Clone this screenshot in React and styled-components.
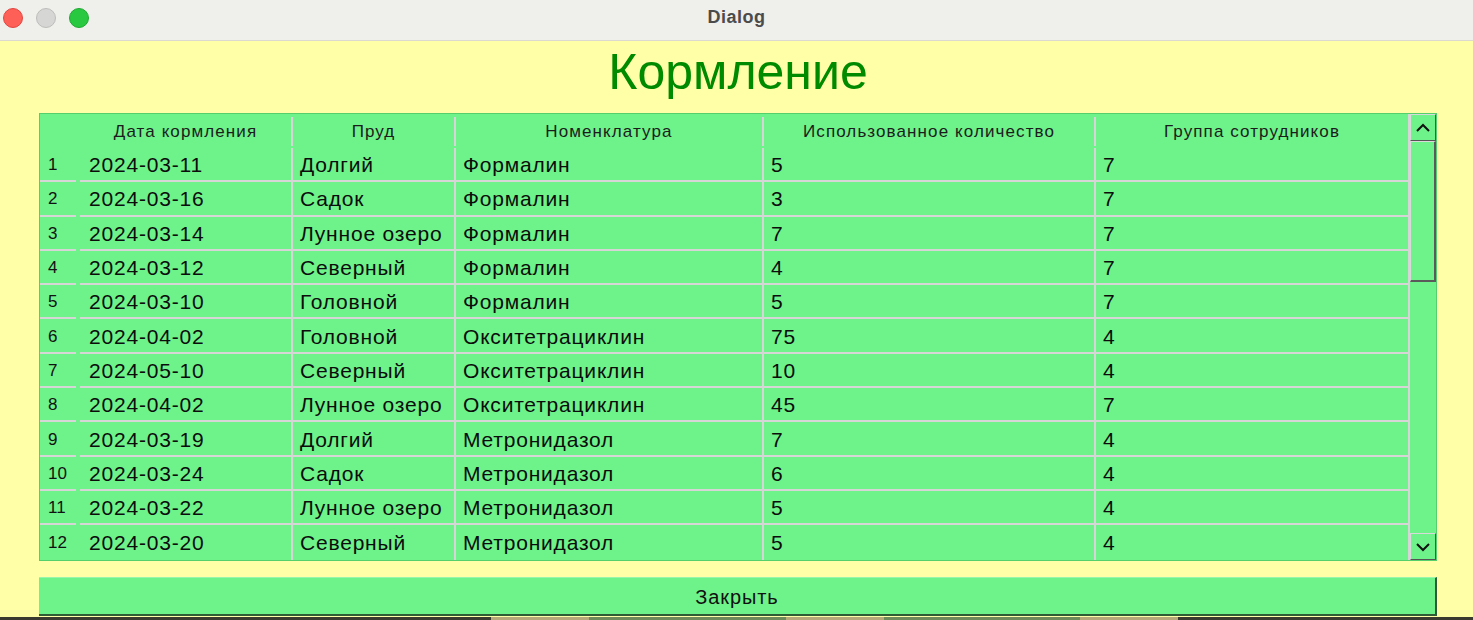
import styled, { createGlobalStyle } from "styled-components";

const GlobalStyle = createGlobalStyle`
  html, body {
    margin: 0;
    padding: 0;
    background: #2b2a26;
  }
  body {
    font-family: "Liberation Sans", Arial, sans-serif;
  }
`;

const rows = [
  ["2024-03-11", "Долгий", "Формалин", "5", "7"],
  ["2024-03-16", "Садок", "Формалин", "3", "7"],
  ["2024-03-14", "Лунное озеро", "Формалин", "7", "7"],
  ["2024-03-12", "Северный", "Формалин", "4", "7"],
  ["2024-03-10", "Головной", "Формалин", "5", "7"],
  ["2024-04-02", "Головной", "Окситетрациклин", "75", "4"],
  ["2024-05-10", "Северный", "Окситетрациклин", "10", "4"],
  ["2024-04-02", "Лунное озеро", "Окситетрациклин", "45", "7"],
  ["2024-03-19", "Долгий", "Метронидазол", "7", "4"],
  ["2024-03-24", "Садок", "Метронидазол", "6", "4"],
  ["2024-03-22", "Лунное озеро", "Метронидазол", "5", "4"],
  ["2024-03-20", "Северный", "Метронидазол", "5", "4"],
];

const headers = [
  "Дата кормления",
  "Пруд",
  "Номенклатура",
  "Использованное количество",
  "Группа сотрудников",
];

const COLS = "40px 211px 163px 308px 332px 314px";

const Window = styled.div`
  width: 1473px;
  height: 620px;
  display: flex;
  flex-direction: column;
  overflow: hidden;
`;

const TitleBar = styled.div`
  height: 41px;
  flex-shrink: 0;
  background: #efefec;
  border-bottom: 1px solid #dcdad0;
  box-sizing: border-box;
  display: flex;
  align-items: center;
  position: relative;
`;

const Lights = styled.div`
  display: flex;
  gap: 13px;
  padding-left: 3px;
  margin-top: -4px;
`;

const Light = styled.span`
  width: 20px;
  height: 20px;
  border-radius: 50%;
  box-sizing: border-box;
  background: ${(p) => p.$color};
  border: 1px solid ${(p) => p.$edge};
`;

const WindowTitle = styled.div`
  position: absolute;
  left: 0;
  right: 0;
  top: 7px;
  text-align: center;
  font-size: 18px;
  letter-spacing: 0.5px;
  font-weight: bold;
  color: #4b4b4b;
`;

const Body = styled.div`
  flex: 1;
  background: #ffffa8;
  display: flex;
  flex-direction: column;
  padding: 0 36px 0 39px;
`;

const Heading = styled.h1`
  margin: 1px 0 0;
  height: 71px;
  text-align: center;
  font-size: 50px;
  font-weight: normal;
  color: #008a00;
  line-height: 60px;
`;

const Table = styled.div`
  display: flex;
  height: 448px;
  background: #6ef28a;
  border: 1px solid #54cf6c;
  box-sizing: border-box;
`;

const Grid = styled.div`
  display: grid;
  grid-template-columns: ${COLS};
  grid-auto-rows: 34.3px;
  grid-template-rows: 34px;
  align-content: start;
`;

const HeadCell = styled.div`
  font-size: 17px;
  letter-spacing: 1.1px;
  color: #1c1c1c;
  display: flex;
  align-items: center;
  justify-content: center;
  padding-top: 1px;
  border-left: ${(p) => (p.$first ? "none" : "2px solid #d6d6d6")};
  margin: 3px 0 2px;
  box-sizing: border-box;
  white-space: nowrap;
`;

const Corner = styled.div``;

const RowNum = styled.div`
  font-size: 17px;
  color: #111;
  display: flex;
  align-items: center;
  padding: 2px 0 0 8px;
  margin-right: 4px;
  border-bottom: ${(p) => (p.$last ? "none" : "2px solid #d6d6d6")};
  box-sizing: border-box;
`;

const Cell = styled.div`
  font-size: 21px;
  letter-spacing: 0.8px;
  color: #0c0c0c;
  display: flex;
  align-items: center;
  padding-top: 2px;
  padding-left: ${(p) => (p.$first ? "9px" : "7px")};
  border-left: ${(p) => (p.$first ? "none" : "2px solid #d6d6d6")};
  border-bottom: ${(p) => (p.$last ? "none" : "2px solid #d6d6d6")};
  box-sizing: border-box;
  white-space: nowrap;
`;

const ScrollBar = styled.div`
  width: 28px;
  display: flex;
  flex-direction: column;
  border-left: 2px solid #d6d6d6;
  box-sizing: border-box;
`;

const ArrowButton = styled.div`
  height: 27px;
  flex-shrink: 0;
  display: flex;
  align-items: center;
  justify-content: center;
  box-sizing: border-box;
  border-top: 1px solid #d9d9d9;
  border-left: 1px solid #d9d9d9;
  border-right: 1px solid #555;
  border-bottom: 1px solid #555;
`;

const Track = styled.div`
  flex: 1;
  display: flex;
  flex-direction: column;
`;

const Thumb = styled.div`
  height: 141px;
  box-sizing: border-box;
  border-top: 1px solid #d9d9d9;
  border-left: 1px solid #d9d9d9;
  border-right: 2px solid #5a5a5a;
  border-bottom: 2px solid #5a5a5a;
`;

const CloseButton = styled.button`
  margin-top: 16px;
  height: 39px;
  width: 1398px;
  background: #6ef28a;
  border: none;
  border-top: 1px solid #9af5ac;
  border-right: 2px solid #2f5b35;
  border-bottom: 2px solid #2f5b35;
  font-family: "Liberation Sans", Arial, sans-serif;
  font-size: 20px;
  letter-spacing: 0.9px;
  color: #111;
  padding: 3px 0 0;
`;

const Backdrop = styled.div`
  height: 5px;
  flex-shrink: 0;
  display: flex;
  border-top: 1px solid #ffffa8;
`;

const BackPiece = styled.div`
  flex: ${(p) => p.$grow};
  background: ${(p) => p.$color};
`;

function Chevron({ down }) {
  return (
    <svg width="16" height="10" viewBox="0 0 16 10">
      <path
        d={down ? "M2 2 L8 8 L14 2" : "M2 8 L8 2 L14 8"}
        fill="none"
        stroke="#111"
        strokeWidth="2"
      />
    </svg>
  );
}

export default function App() {
  return (
    <>
      <GlobalStyle />
      <Window>
        <TitleBar>
          <Lights>
            <Light $color="#fe5f57" $edge="#e2463f" />
            <Light $color="#d6d6d4" $edge="#bdbdbb" />
            <Light $color="#28c840" $edge="#1eaa32" />
          </Lights>
          <WindowTitle>Dialog</WindowTitle>
        </TitleBar>
        <Body>
          <Heading>Кормление</Heading>
          <Table>
            <Grid>
              <Corner />
              {headers.map((h, i) => (
                <HeadCell key={h} $first={i === 0}>
                  {h}
                </HeadCell>
              ))}
              {rows.map((r, ri) => {
                const last = ri === rows.length - 1;
                return [
                  <RowNum key={`n${ri}`} $last={last}>
                    {ri + 1}
                  </RowNum>,
                  ...r.map((v, ci) => (
                    <Cell key={`${ri}-${ci}`} $first={ci === 0} $last={last}>
                      {v}
                    </Cell>
                  )),
                ];
              })}
            </Grid>
            <ScrollBar>
              <ArrowButton>
                <Chevron />
              </ArrowButton>
              <Track>
                <Thumb />
              </Track>
              <ArrowButton>
                <Chevron down />
              </ArrowButton>
            </ScrollBar>
          </Table>
          <CloseButton>Закрыть</CloseButton>
        </Body>
        <Backdrop>
          <BackPiece $grow={5} $color="#3a3a30" />
          <BackPiece $grow={1} $color="#b7a87a" />
          <BackPiece $grow={2} $color="#6f8a5a" />
          <BackPiece $grow={1} $color="#b7a87a" />
          <BackPiece $grow={2} $color="#6f8a5a" />
          <BackPiece $grow={1} $color="#b7a87a" />
          <BackPiece $grow={3} $color="#3a3a30" />
        </Backdrop>
      </Window>
    </>
  );
}
